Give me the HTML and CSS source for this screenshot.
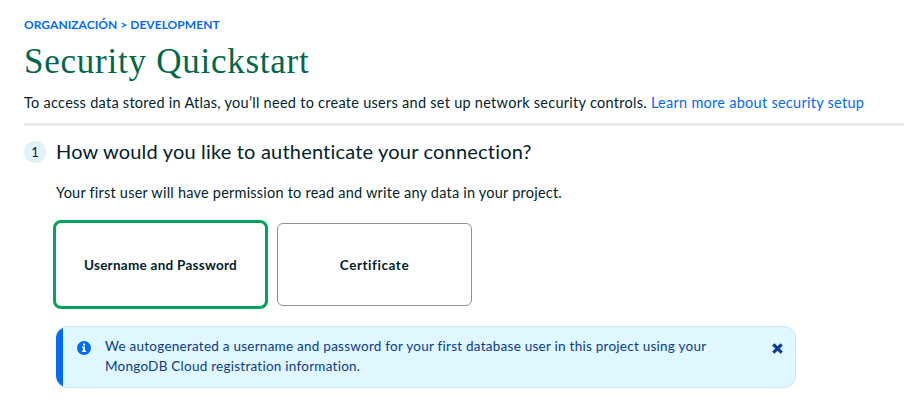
FILE: index.html
```html
<!DOCTYPE html>
<html lang="en">
<head>
<meta charset="utf-8">
<title>Security Quickstart</title>
<link rel="stylesheet" href="styles.css">
</head>
<body>
<main class="page">
  <nav class="breadcrumb">ORGANIZACIÓN &gt; DEVELOPMENT</nav>
  <h1 class="title">Security Quickstart</h1>
  <p class="intro">To access data stored in Atlas, you’ll need to create users and set up network security controls. <a class="link">Learn more about security setup</a></p>
  <hr class="divider">
  <section class="step">
    <div class="badge">1</div>
    <div class="content">
      <h2 class="question">How would you like to authenticate your connection?</h2>
      <p class="hint">Your first user will have permission to read and write any data in your project.</p>
      <div class="options">
        <button class="option selected">Username and Password</button>
        <button class="option certificate">Certificate</button>
      </div>
      <div class="banner">
        <svg class="info" viewBox="0 0 14 14"><circle cx="7" cy="7" r="7" fill="#016bf8"/><path d="M6 2.4h2v2H6zM5 5.4h3v4.4h1.2v1.3H4.9V9.8H6V6.7H5z" fill="#fff"/></svg>
        <p class="message">We autogenerated a username and password for your first database user in this project using your<br>MongoDB Cloud registration information.</p>
        <svg class="close" viewBox="0 0 10 10"><path d="M1.2 1.2l7.6 7.6M8.8 1.2l-7.6 7.6" stroke="#083c90" stroke-width="2.8"/></svg>
      </div>
    </div>
  </section>
</main>
</body>
</html>
```
FILE: styles.css
```css
* { box-sizing: border-box; }
body { margin: 0; background: #fff; color: #001e2b; font-family: Lato, sans-serif; font-size: 14.5px; font-variant-ligatures: none; }
h1, h2, p { margin: 0; font-weight: 400; white-space: nowrap; }
.page { padding: 17px 0 0 24px; }
.breadcrumb { font-size: 12px; line-height: 16px; font-weight: 700; letter-spacing: 0.04px; color: #016bf8; }
.title { margin-top: 8px; font-family: "Liberation Serif", serif; font-size: 35px; line-height: 42px; letter-spacing: 0.75px; color: #00684a; }
.intro { margin-top: 10px; line-height: 20px; letter-spacing: 0.27px; }
.link { color: #016bf8; }
.divider { margin: 10px 0 0; border: 0; height: 3px; background: #e8edeb; }
.step { display: flex; gap: 10px; padding-top: 13px; }
.badge { width: 22px; height: 22px; margin-top: 2px; border-radius: 50%; background: #e1f2f6; text-align: center; line-height: 22px; font-size: 13px; }
.question { font-size: 20px; line-height: 24px; letter-spacing: 0.19px; }
.hint { margin-top: 20px; line-height: 20px; letter-spacing: 0.22px; }
.options { display: flex; gap: 9px; align-items: center; margin: 17px 0 0 -3px; }
.option { width: 195px; height: 83px; padding: 0; border: 1px solid #889397; border-radius: 6px; background: #fff; color: #001e2b; font: 700 13.5px/20px Lato, sans-serif; letter-spacing: 0.27px; }
.option.selected { width: 215px; height: 89px; border: 3px solid #00a35c; border-radius: 8px; }
.option.certificate { letter-spacing: 0.56px; }
.banner { display: flex; width: 740px; height: 62px; margin-top: 17px; padding: 9px 0 0 21px; border: 1px solid #c3e7fe; border-left: 0; border-radius: 12px; background: linear-gradient(90deg, #016bf8 7px, #e1f7ff 7px); color: #083c90; font-size: 13.5px; line-height: 20px; }
.message { letter-spacing: 0.25px; }
.info { width: 14px; height: 14px; margin: 5px 14px 0 0; }
.close { width: 11px; height: 11px; margin: 7px 12px 0 auto; }
```
